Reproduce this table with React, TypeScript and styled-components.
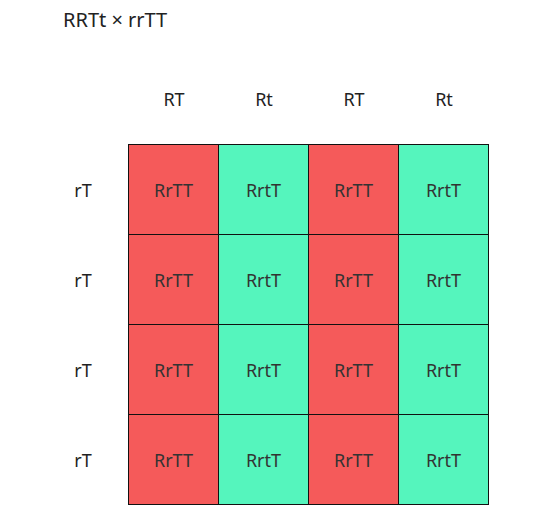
import styled, { createGlobalStyle } from "styled-components";

const GlobalStyle = createGlobalStyle`
    body {
        margin: 0;
        background: #fff;
        font-family: "Noto Sans", "Open Sans", sans-serif;
        color: #222;
    }
`;

const PageStyled = styled.div`
    width: 560px;
    height: 520px;
    padding: 7px 0 0 30px;
    box-sizing: border-box;
`;

const TitleStyled = styled.h1`
    margin: 0 0 0 33px;
    font-size: 20px;
    font-weight: 400;
    line-height: 26px;
    color: #222;
`;

const SquareStyled = styled.div`
    display: grid;
    grid-template-columns: 90px 361px;
    grid-template-rows: 90px 361px;
    margin: 21px 0 0 8px;
`;

const HeaderRowStyled = styled.div`
    grid-column: 2;
    display: grid;
    grid-template-columns: repeat(4, 90px);
    padding-left: 1px;
`;

const SideColumnStyled = styled.div`
    grid-row: 2;
    display: grid;
    grid-template-rows: repeat(4, 90px);
    padding-top: 1px;
`;

const LabelStyled = styled.div`
    display: flex;
    align-items: center;
    justify-content: center;
    font-size: 18px;
    color: #222;
`;

const BoardStyled = styled.div`
    display: grid;
    grid-template-columns: repeat(4, 89px);
    grid-auto-rows: 89px;
    gap: 1px;
    border: 1px solid #111;
    background: #111;
`;

const CellStyled = styled.div<{ $dominant: boolean }>`
    display: flex;
    align-items: center;
    justify-content: center;
    font-size: 18px;
    color: #333;
    background: ${(p) => (p.$dominant ? "#f55a5a" : "#55f5bd")};
`;

const TOP = ["RT", "Rt", "RT", "Rt"];
const SIDE = ["rT", "rT", "rT", "rT"];
const ROW = ["RrTT", "RrtT", "RrTT", "RrtT"];

const App = () => {
    return (
        <PageStyled>
            <GlobalStyle />
            <TitleStyled>RRTt × rrTT</TitleStyled>
            <SquareStyled>
                <div />
                <HeaderRowStyled>
                    {TOP.map((g, i) => (
                        <LabelStyled key={i}>{g}</LabelStyled>
                    ))}
                </HeaderRowStyled>
                <SideColumnStyled>
                    {SIDE.map((g, i) => (
                        <LabelStyled key={i}>{g}</LabelStyled>
                    ))}
                </SideColumnStyled>
                <BoardStyled>
                    {SIDE.map((s, i) =>
                        ROW.map((child, j) => (
                            <CellStyled key={`${i}-${j}`} $dominant={child === "RrTT"}>
                                {child}
                            </CellStyled>
                        ))
                    )}
                </BoardStyled>
            </SquareStyled>
        </PageStyled>
    );
};

export default App;
